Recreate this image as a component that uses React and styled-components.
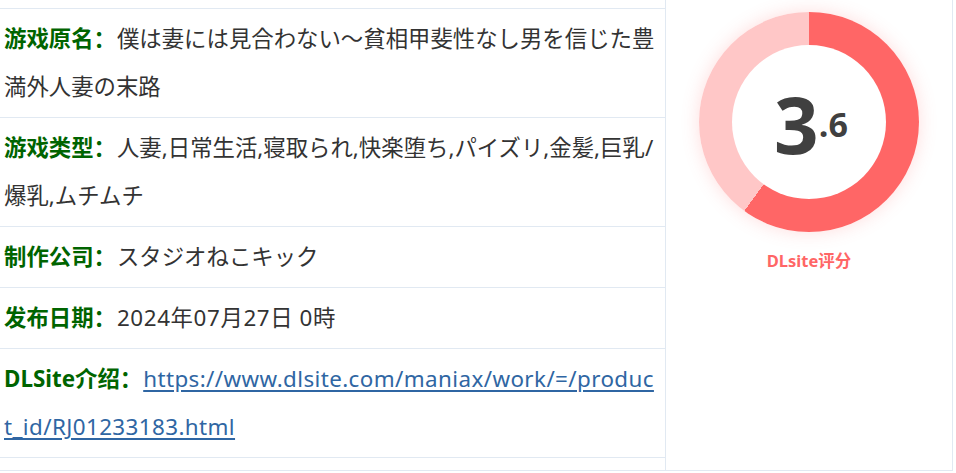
import React from "react"
import styled, { createGlobalStyle } from "styled-components"

const GlobalStyle = createGlobalStyle`
    html, body {
        margin:0;
        padding:0;
        background:#ffffff;
    }
`

const Table = styled.div`
    display:grid;
    grid-template-columns:665px 1fr;
    width:953px;
    border-right:1px solid #e1e9f2;
    border-bottom:1px solid #e1e9f2;
    box-sizing:border-box;
`

const InfoList = styled.ul`
    list-style:none;
    margin:0;
    padding:8px 0 12px;
`

const InfoRow = styled.li`
    padding:6px 6px 6px 4px;
    border-top:1px solid #e1e9f2;
    font-size:22.4px;
    line-height:48px;
    color:#333333;
    font-family:"Noto Sans", "Noto Sans CJK JP", sans-serif;
    word-break:break-all;
    &:last-child {
        border-bottom:1px solid #e1e9f2;
    }
`

const Label = styled.span`
    font-family:"Noto Sans", "Noto Sans CJK SC", sans-serif;
    font-weight:700;
    color:#006400;
    margin-right:1px;
`

const Value = styled.span`
    font-family:"Noto Sans", "Noto Sans CJK JP", sans-serif;
    letter-spacing:${({wide})=>wide ? "0.6px" : "0"};
`

const ValueLink = styled.a`
    color:#2f66a3;
    text-decoration:underline;
    text-underline-offset:3px;
    letter-spacing:0.4px;
`

const ScoreCell = styled.div`
    border-left:1px solid #e1e9f2;
    display:flex;
    flex-direction:column;
    align-items:center;
    padding-top:12px;
`

const Donut = styled.div`
    width:220px;
    height:220px;
    border-radius:50%;
    background:conic-gradient(#ff6666 0 ${({percent})=>percent}%, #ffc7c7 ${({percent})=>percent}% 100%);
    box-shadow:0 0 18px rgba(255,102,102,0.22);
    display:flex;
    align-items:center;
    justify-content:center;
`

const Hole = styled.div`
    width:154px;
    height:154px;
    border-radius:50%;
    background:#ffffff;
    display:flex;
    align-items:center;
    justify-content:center;
    color:#404040;
    font-family:"Open Sans", "Noto Sans", sans-serif;
    font-weight:700;
    padding-left:4px;
    box-sizing:border-box;
`

const Whole = styled.span`
    font-size:78px;
    line-height:1;
    margin-top:4px;
`

const Fraction = styled.span`
    font-size:34px;
    line-height:1;
    margin-top:4px;
`

const ScoreLabel = styled.div`
    margin-top:16px;
    color:#ff6666;
    font-size:16.5px;
    font-weight:700;
    font-family:"Noto Sans", "Noto Sans CJK SC", sans-serif;
`

const rows = [
    { label: "游戏原名：", value: "僕は妻には見合わない～貧相甲斐性なし男を信じた豊満外人妻の末路" },
    { label: "游戏类型：", value: "人妻,日常生活,寝取られ,快楽堕ち,パイズリ,金髪,巨乳/爆乳,ムチムチ" },
    { label: "制作公司：", value: "スタジオねこキック" },
    { label: "发布日期：", value: "2024年07月27日 0時", wide: true },
    { label: "DLSite介绍：", link: "https://www.dlsite.com/maniax/work/=/product_id/RJ01233183.html" },
]

function App(){
    const score = 3.6
    const [whole, fraction] = score.toFixed(1).split(".")
    return(
        <>
            <GlobalStyle/>
            <Table>
                <InfoList>
                    {rows.map((row)=>(
                        <InfoRow key={row.label}>
                            <Label>{row.label}</Label>
                            {row.link
                                ? <ValueLink href={row.link}>{row.link}</ValueLink>
                                : <Value wide={row.wide}>{row.value}</Value>}
                        </InfoRow>
                    ))}
                </InfoList>
                <ScoreCell>
                    <Donut percent={score/6*100}>
                        <Hole>
                            <Whole>{whole}</Whole>
                            <Fraction>.{fraction}</Fraction>
                        </Hole>
                    </Donut>
                    <ScoreLabel>DLsite评分</ScoreLabel>
                </ScoreCell>
            </Table>
        </>
    )
}

export default App
